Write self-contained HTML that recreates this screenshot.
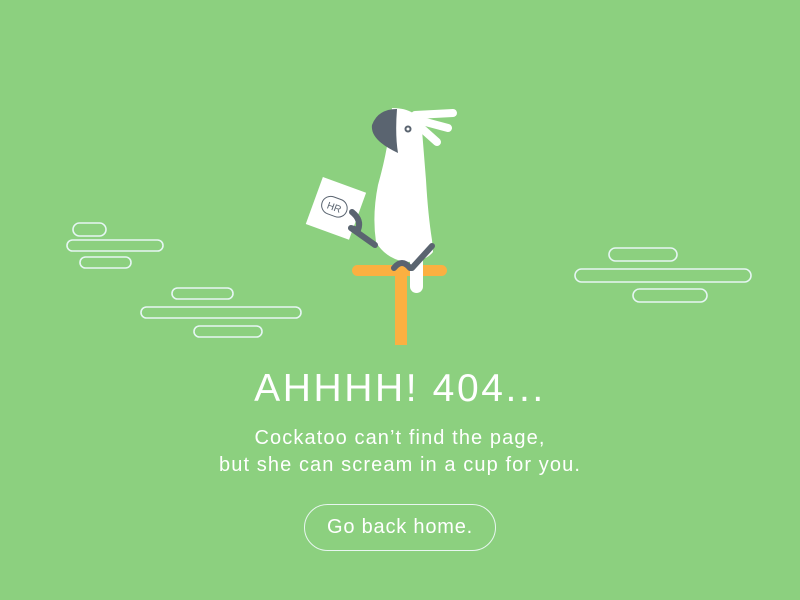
<!DOCTYPE html>
<html><head><meta charset="utf-8"><style>
html,body{margin:0;padding:0}
body{width:800px;height:600px;background:#8cd07f;overflow:hidden;position:relative;font-family:"Liberation Sans",sans-serif;color:#fff}
svg{position:absolute;left:0;top:0}
.t{position:absolute;left:0;width:800px;text-align:center}
h1{position:absolute;left:0;width:800px;text-align:center;top:367px;margin:0;font-weight:normal;font-size:39px;letter-spacing:2.6px}
.btn{position:absolute;left:304px;top:504px;width:190px;height:45px;border:1px solid #e8f6f0;border-radius:24px;text-align:center;line-height:45px;font-size:20px;letter-spacing:.8px}
</style></head><body>
<svg width="800" height="600" viewBox="0 0 800 600">
<g fill="none" stroke="#e6f6f4" stroke-width="1.6">
<rect x="73" y="223" width="33" height="13" rx="6.5"/>
<rect x="67" y="240" width="96" height="11" rx="5.5"/>
<rect x="80" y="257" width="51" height="11" rx="5.5"/>
<rect x="172" y="288" width="61" height="11" rx="5.5"/>
<rect x="141" y="307" width="160" height="11" rx="5.5"/>
<rect x="194" y="326" width="68" height="11" rx="5.5"/>
<rect x="609" y="248" width="68" height="13" rx="6.5"/>
<rect x="575" y="269" width="176" height="13" rx="6.5"/>
<rect x="633" y="289" width="74" height="13" rx="6.5"/>
</g>
<rect x="395" y="270" width="12" height="75" fill="#fbb041"/>
<rect x="352" y="265" width="95" height="11" rx="5.5" fill="#fbb041"/>
<rect x="410" y="255" width="13" height="38" rx="6.5" fill="#fff"/>
<g stroke="#fff" stroke-width="8" stroke-linecap="round">
<line x1="415" y1="115" x2="453" y2="113"/>
<line x1="418" y1="120" x2="448" y2="128"/>
<line x1="418" y1="125" x2="437" y2="142"/>
</g>
<path d="M392 108 Q420 108 422 130 L426 180 Q428 215 432 240 L433 252 Q425 262 405 262 Q385 258 376 242 Q372 215 378 185 Q385 160 388 140 Z" fill="#fff"/>
<path d="M397 109 Q378 109 372 125 Q370 140 398 153 Q395 135 397 109 Z" fill="#5a6470"/>
<circle cx="408" cy="129" r="3.5" fill="#5a6470"/><circle cx="408" cy="129" r="1.5" fill="#fff"/>
<g transform="rotate(20 335 208)">
<rect x="313" y="183" width="46" height="50" fill="#fff"/>
<rect x="321" y="198" width="26" height="18" rx="9" fill="none" stroke="#5a6470" stroke-width="1"/>
<text x="334" y="211" font-size="10" fill="#5a6470" text-anchor="middle" font-family="Liberation Sans">HR</text>
</g>
<path d="M352 212 Q362 220 358 230 L351 228 L375 245" fill="none" stroke="#5a6470" stroke-width="6" stroke-linecap="round" stroke-linejoin="round"/>
<path d="M432 246 L412 268 M394 268 Q402 258 410 268" fill="none" stroke="#5a6470" stroke-width="6" stroke-linecap="round"/>
</svg>
<h1>AHHHH! 404...</h1>
<div class="t" style="top:427px;font-size:20px;letter-spacing:1.1px">Cockatoo can’t find the page,</div>
<div class="t" style="top:454px;font-size:20px;letter-spacing:1.1px">but she can scream in a cup for you.</div>
<div class="btn">Go back home.</div>
</body></html>
